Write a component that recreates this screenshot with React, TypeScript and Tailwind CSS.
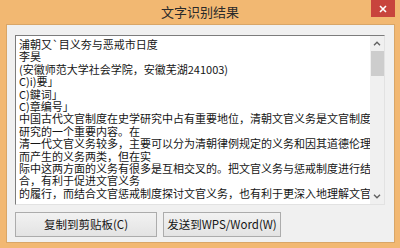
import React from "react";

const lines = [
  "浦朝又`目义夯与恶戒市日度",
  "李昊",
  "(安徽师范大学社会学院，安徽芜湖241003)",
  "C)i)要」",
  "C)鍵词」",
  "C)章编号」",
  "中国古代文官制度在史学研究中占有重要地位，清朝文官义务是文官制度",
  "研究的一个重要内容。在",
  "清一代文官义务较多，主要可以分为清朝律例规定的义务和因其道德伦理",
  "而产生的义务两类，但在实",
  "际中这两方面的义务有很多是互相交叉的。把文官义务与惩戒制度进行结",
  "合，有利于促进文官义务",
  "的履行，而结合文官惩戒制度探讨文官义务，也有利于更深入地理解文官",
];

const font = { fontFamily: '"Noto Sans CJK SC", "Noto Sans", sans-serif' };

export default function App() {
  return (
    <div
      className="w-[400px] h-[248px] bg-[#f2b872] flex flex-col overflow-hidden"
      style={font}
    >
      <div className="relative h-[24px] shrink-0 flex items-center justify-center">
        <span className="text-[13px] leading-none text-[#2a2a2a] mt-[-2px]">文字识别结果</span>
        <div className="absolute right-[5px] top-0 w-[24px] h-[17px] bg-[#c8443d] flex items-center justify-center">
          <svg width="8" height="8" viewBox="0 0 8 8">
            <path d="M1 1 L7 7 M7 1 L1 7" stroke="#ffffff" strokeWidth="1.6" />
          </svg>
        </div>
      </div>
      <div className="ml-[6px] mr-[5px] mb-[5px] flex-1 bg-[#f0f0f0] border border-[#d9a667] pl-[8px] pt-[10px] flex flex-col">
        <div className="w-[370px] h-[170px] bg-white border-t border-l border-t-[#7c7c7c] border-l-[#7c7c7c] border-r border-b border-r-[#e2e2e2] border-b-[#e2e2e2] flex">
          <div className="flex-1 overflow-hidden pl-[3px] pt-[2px] text-[11px] leading-[12.4px] text-[#151515]">
            {lines.map((l, i) => (
              <div key={i} className="whitespace-nowrap">
                {l}
              </div>
            ))}
          </div>
          <div className="w-[14px] bg-[#f0f0f0] flex flex-col items-center">
            <div className="h-[15px] flex items-center justify-center">
              <svg width="8" height="5" viewBox="0 0 8 5">
                <path d="M1 4.2 L4 1.2 L7 4.2" stroke="#606060" strokeWidth="1.4" fill="none" />
              </svg>
            </div>
            <div className="w-[13px] h-[25px] bg-[#cdcdcd]" />
            <div className="flex-1" />
            <div className="h-[16px] flex items-center justify-center">
              <svg width="8" height="5" viewBox="0 0 8 5">
                <path d="M1 0.8 L4 3.8 L7 0.8" stroke="#606060" strokeWidth="1.4" fill="none" />
              </svg>
            </div>
          </div>
        </div>
        <div className="mt-[7px] flex gap-[6px]">
          <button className="w-[142px] h-[25px] border border-[#acacac] bg-gradient-to-b from-[#f2f2f2] to-[#e3e3e3] text-[11.5px] text-[#151515] flex items-center justify-center">
            复制到剪贴板(C)
          </button>
          <button className="w-[118px] h-[25px] border border-[#acacac] bg-gradient-to-b from-[#f2f2f2] to-[#e3e3e3] text-[11.5px] text-[#151515] flex items-center justify-center">
            发送到WPS/Word(W)
          </button>
        </div>
      </div>
    </div>
  );
}
